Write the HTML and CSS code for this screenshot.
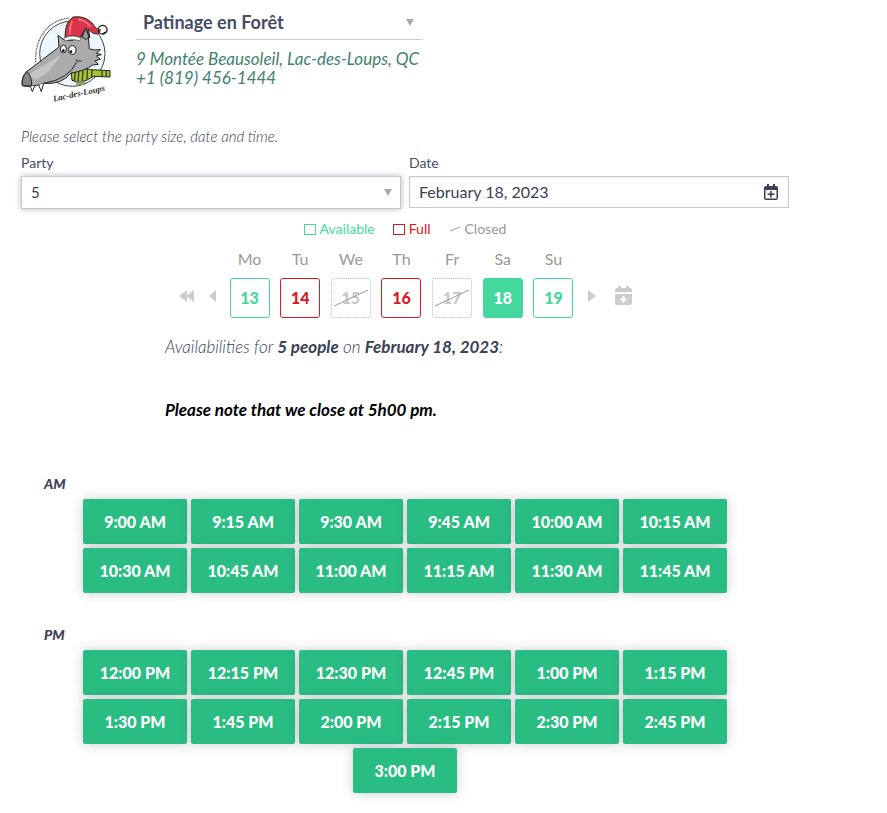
FILE: index.html
```html
<!DOCTYPE html>
<html lang="en">
<head>
  <meta charset="UTF-8" />
  <title>Patinage en Forêt - Reservation</title>
  <meta name="viewport" content="width=device-width, initial-scale=1.0" />
  <link rel="stylesheet" href="styles.css">
</head>
<body>
  <main class="booking">
    <header class="venue">
      <svg class="logo" viewBox="33 24 276 291" role="img" aria-label="Lac-des-Loups">
        <circle cx="187" cy="146" r="98" fill="#eef8fc" stroke="#444" stroke-width="3" />
        <path d="M77 172C74 100 112 46 178 39" fill="none" stroke="#555" stroke-width="4" stroke-dasharray="3 2" />
        <!-- scarf -->
        <path d="M184 204Q212 184 242 194L300 197V216L250 214Q214 240 186 226Z" fill="#a5c33a" stroke="#222" stroke-width="3" />
        <path d="M196 199l-3 29M207 196l-3 34M219 193l-2 36M232 192l-1 33M246 195l-1 21M276 197v18M289 197v18" stroke="#35451c" stroke-width="4" />
        <path d="M197 230l30-3-4 14-24-2z" fill="#8d9c72" />
        <!-- head -->
        <path d="M144 91L147 126Q96 165 51 199Q32 218 37 242Q60 249 101 235Q155 240 183 204Q224 198 248 180L265 178 255 167 271 163 259 153 274 149 259 144 271 134Q252 136 238 132L235 95 228 68 211 98 184 107 164 106Z" fill="#ababab" stroke="#222" stroke-width="3" stroke-linejoin="round" />
        <path d="M55 210Q112 175 151 151Q117 211 75 224Z" fill="#d2d2d2" opacity=".65" />
        <path d="M51 199Q66 214 65 243L37 242Q34 216 51 199Z" fill="#858585" stroke="#222" stroke-width="3" />
        <path d="M61 244l6 16 7-17M86 240l8 20 7-25" fill="#fff" stroke="#222" stroke-width="3" />
        <path d="M101 235Q176 223 201 170M197 164q8 7 17 4" fill="none" stroke="#222" stroke-width="3" />
        <!-- eyes -->
        <ellipse cx="160" cy="132" rx="9" ry="12" fill="#fff" stroke="#222" stroke-width="3" />
        <ellipse cx="187" cy="135" rx="11" ry="13" fill="#fff" stroke="#222" stroke-width="3" />
        <circle cx="160" cy="137" r="4" fill="#111" />
        <circle cx="183" cy="140" r="4" fill="#111" />
        <!-- hat -->
        <path d="M165 98Q165 49 190 36Q224 31 246 54Q256 72 272 78L265 87Q246 87 236 73L239 99 227 69 211 98Q184 88 165 98Z" fill="#da3448" stroke="#222" stroke-width="3" />
        <path d="M187 49Q178 67 180 88M204 43Q226 46 242 65" fill="none" stroke="#ef7980" stroke-width="5" />
        <path d="M162 99Q187 87 213 99L210 107Q184 99 164 108Z" fill="#fff" stroke="#555" stroke-width="2" />
        <path d="M227 69L216 96 229 104 237 95Z" fill="#999" stroke="#222" stroke-width="3" />
        <circle cx="278" cy="74" r="13" fill="#fff" stroke="#222" stroke-width="4" />
        <path d="M266 82q6-4 4-10M279 88q4-8 9-6" fill="none" stroke="#222" stroke-width="4" />
        <text class="logo-text" x="131" y="290" transform="rotate(-12 131 290)">Lac-des-Loups</text>
      </svg>
      <div class="venue-info">
        <div class="select-wrap">
          <select class="venue-select" aria-label="Location">
            <option>Patinage en Forêt</option>
          </select>
          <svg class="arrow" viewBox="0 0 8 7" aria-hidden="true"><path d="M0 0h8L4 7z" /></svg>
        </div>
        <address>
          <a href="#map">9 Montée Beausoleil, Lac-des-Loups, QC</a>
          <a href="tel:+18194561444">+1 (819) 456-1444</a>
        </address>
      </div>
    </header>

    <p class="hint">Please select the party size, date and time.</p>

    <form class="fields">
      <div class="field">
        <label for="party">Party</label>
        <div class="select-wrap">
          <select id="party" class="control party">
            <option>5</option>
          </select>
          <svg class="arrow" viewBox="0 0 8 7" aria-hidden="true"><path d="M0 0h8L4 7z" /></svg>
        </div>
      </div>
      <div class="field">
        <label for="date">Date</label>
        <div class="select-wrap">
          <input id="date" class="control date" type="text" value="February 18, 2023" />
          <svg class="date-icon" viewBox="0 0 14 16" aria-hidden="true">
            <path fill-rule="evenodd" d="M2 2h1V0h2v2h4V0h2v2h1q2 0 2 2v10q0 2-2 2H2q-2 0-2-2V4q0-2 2-2zM1.500 6v8.500h11V6z" />
            <path d="M6.200 7h1.600v2.400h2.700v1.600H7.800v2.500H6.200V11H3.500V9.400h2.700z" />
          </svg>
        </div>
      </div>
    </form>

    <div class="legend">
      <span class="available"><i class="box"></i>Available</span>
      <span class="full"><i class="box"></i>Full</span>
      <span class="closed"><svg viewBox="0 0 12 6" aria-hidden="true"><path d="M1 5L11 1" /></svg>Closed</span>
    </div>

    <div class="calendar">
      <div class="nav nav-prev">
        <button type="button" aria-label="Previous week"><svg width="15" height="12" viewBox="0 0 15 12"><path d="M8 0v12L0 6zM15 0v12L7 6z" /></svg></button>
        <button type="button" aria-label="Previous day"><svg width="7" height="12" viewBox="0 0 7 12"><path d="M7 0v12L0 6z" /></svg></button>
      </div>
      <div class="days">
        <span>Mo</span><span>Tu</span><span>We</span><span>Th</span><span>Fr</span><span>Sa</span><span>Su</span>
        <button type="button" class="day available">13</button>
        <button type="button" class="day full">14</button>
        <button type="button" class="day off" disabled>15<svg viewBox="0 0 38 38" aria-hidden="true"><path d="M2 27L36 11" /></svg></button>
        <button type="button" class="day full">16</button>
        <button type="button" class="day off" disabled>17<svg viewBox="0 0 38 38" aria-hidden="true"><path d="M2 27L36 11" /></svg></button>
        <button type="button" class="day selected">18</button>
        <button type="button" class="day available">19</button>
      </div>
      <div class="nav nav-next">
        <button type="button" aria-label="Next day"><svg width="8" height="12" viewBox="0 0 8 12"><path d="M0 0v12L8 6z" /></svg></button>
        <button type="button" aria-label="Open calendar">
          <svg width="17" height="20" viewBox="0 0 17 20">
            <path d="M2 2h1V0h3v2h5V0h3v2h1q2 0 2 2v2H0V4q0-2 2-2z" />
            <path fill-rule="evenodd" d="M0 8h17v9q0 2-2 2H2q-2 0-2-2zM7.500 10v2.500H5v2h2.500V17h2v-2.500H12v-2H9.500V10z" />
          </svg>
        </button>
      </div>
    </div>

    <div class="messages">
      <p>Availabilities for <strong>5 people</strong> on <strong>February 18, 2023</strong>:</p>
      <p class="note">Please note that we close at 5h00 pm.</p>
    </div>

    <section class="slots">
      <h2>AM</h2>
      <div class="times">
        <button type="button">9:00 AM</button>
        <button type="button">9:15 AM</button>
        <button type="button">9:30 AM</button>
        <button type="button">9:45 AM</button>
        <button type="button">10:00 AM</button>
        <button type="button">10:15 AM</button>
        <button type="button">10:30 AM</button>
        <button type="button">10:45 AM</button>
        <button type="button">11:00 AM</button>
        <button type="button">11:15 AM</button>
        <button type="button">11:30 AM</button>
        <button type="button">11:45 AM</button>
      </div>
    </section>

    <section class="slots">
      <h2>PM</h2>
      <div class="times">
        <button type="button">12:00 PM</button>
        <button type="button">12:15 PM</button>
        <button type="button">12:30 PM</button>
        <button type="button">12:45 PM</button>
        <button type="button">1:00 PM</button>
        <button type="button">1:15 PM</button>
        <button type="button">1:30 PM</button>
        <button type="button">1:45 PM</button>
        <button type="button">2:00 PM</button>
        <button type="button">2:15 PM</button>
        <button type="button">2:30 PM</button>
        <button type="button">2:45 PM</button>
        <button type="button">3:00 PM</button>
      </div>
    </section>
  </main>
</body>
</html>
```
FILE: styles.css
```css
* {
  box-sizing: border-box;
}
body {
  margin: 0;
  background: #fff;
  color: #3a4055;
  font-family: Lato, 'Open Sans', sans-serif;
  font-size: 16px;
  line-height: 20px;
}
button, input, select {
  font: inherit;
}
p, h2 {
  margin: 0;
}
.booking {
  max-width: 810px;
  padding: 6px 21px 20px;
}

/* venue */
.venue {
  display: flex;
  gap: 23px;
}
.venue-info {
  min-width: 287px;
}
.logo {
  width: 92px;
  height: 97px;
  margin-top: 7px;
}
.logo-text {
  font-family: 'Liberation Serif', serif;
  font-style: italic;
  font-weight: bold;
  font-size: 26px;
  fill: #333;
}
.select-wrap {
  position: relative;
}
.arrow {
  position: absolute;
  top: 50%;
  right: 9px;
  width: 8px;
  height: 7px;
  margin-top: -4px;
  fill: #a9a9a9;
  pointer-events: none;
}
.venue-select {
  appearance: none;
  width: 100%;
  height: 34px;
  padding: 0 24px 2px 7px;
  border: 0;
  border-bottom: 1px solid #ccc;
  background: none;
  color: #454d66;
  font-size: 18px;
  font-weight: bold;
}
address {
  margin-top: 9px;
  font-size: 17px;
  line-height: 19px;
}
address a {
  display: block;
  color: #43806f;
  text-decoration: none;
}

/* form */
.hint {
  margin-top: 16px;
  font-size: 15px;
  font-style: italic;
  font-weight: 300;
}
.fields {
  display: grid;
  grid-template-columns: 1fr 1fr;
  gap: 8px;
  margin-top: 7px;
}
.field label {
  display: block;
  margin-bottom: 3px;
  color: #454d66;
  font-size: 14px;
}
.control {
  display: block;
  width: 100%;
  height: 32px;
  padding: 0 9px 2px;
  border: 1px solid #c8c8c8;
  border-radius: 0;
  background: #fff;
  color: #3a4055;
}
.party {
  appearance: none;
  height: 33px;
  font-size: 15px;
  box-shadow: 0 0 6px rgba(50, 50, 80, 0.35);
}
.date {
  box-shadow: inset 0 1px 3px rgba(0, 0, 0, 0.08);
}
.date-icon {
  position: absolute;
  top: 8px;
  right: 11px;
  width: 14px;
  height: 16px;
  fill: #3a3f55;
}

/* calendar */
.legend {
  display: flex;
  justify-content: center;
  gap: 18px;
  margin-top: 10px;
  font-size: 14px;
}
.legend span {
  display: flex;
  align-items: center;
  gap: 4px;
}
.legend .box {
  width: 12px;
  height: 11px;
  border: 1px solid;
}
.legend svg {
  width: 12px;
  height: 6px;
}
.legend path, .off path {
  fill: none;
  stroke: #999;
}
.available {
  color: #44d79e;
}
.full {
  color: #d71920;
}
.closed {
  color: #999;
}
.calendar {
  display: flex;
  justify-content: center;
  gap: 14px;
  margin-top: 10px;
}
.nav {
  display: flex;
  align-items: center;
  height: 40px;
  margin-top: 27px;
}
.nav-prev {
  gap: 15px;
}
.nav-next {
  gap: 19px;
}
.nav button {
  display: flex;
  padding: 0;
  border: 0;
  background: none;
  cursor: pointer;
}
.nav svg {
  fill: #ccc;
}
.days {
  display: grid;
  grid-template-columns: repeat(7, 40px);
  justify-content: space-between;
  row-gap: 10px;
  width: 344px;
  text-align: center;
}
.days span {
  color: #999;
  line-height: 19px;
}
.day {
  position: relative;
  height: 40px;
  padding: 0;
  border: 1px solid;
  border-radius: 3px;
  background: #fff;
  font-weight: 900;
  cursor: pointer;
}
.off {
  border: 1px dotted #bbb;
  color: #c8c8c8;
}
.off svg {
  position: absolute;
  inset: 0;
}
.selected {
  border-color: #44d79e;
  background: #44d79e;
  color: #fff;
}

/* messages */
.messages {
  padding: 19px 0 0 144px;
  font-size: 17px;
  font-style: italic;
  font-weight: 300;
}
.messages strong {
  font-weight: bold;
}
.note {
  margin-top: 43px;
  color: #000;
  font-weight: bold;
}

/* time slots */
.slots {
  margin-top: 54px;
}
.slots + .slots {
  margin-top: 32px;
}
.slots h2 {
  padding-left: 23px;
  font-size: 14px;
  font-style: italic;
  font-weight: 900;
}
.times {
  display: flex;
  flex-wrap: wrap;
  justify-content: center;
  gap: 4px;
  margin-top: 5px;
  padding: 0 60px;
}
.times button {
  width: 104px;
  height: 45px;
  padding: 0;
  border: 0;
  border-radius: 2px;
  background: #29bd83;
  box-shadow: 0 0 12px rgba(50, 50, 80, 0.25);
  color: #fff;
  font-weight: 900;
  cursor: pointer;
}
```
